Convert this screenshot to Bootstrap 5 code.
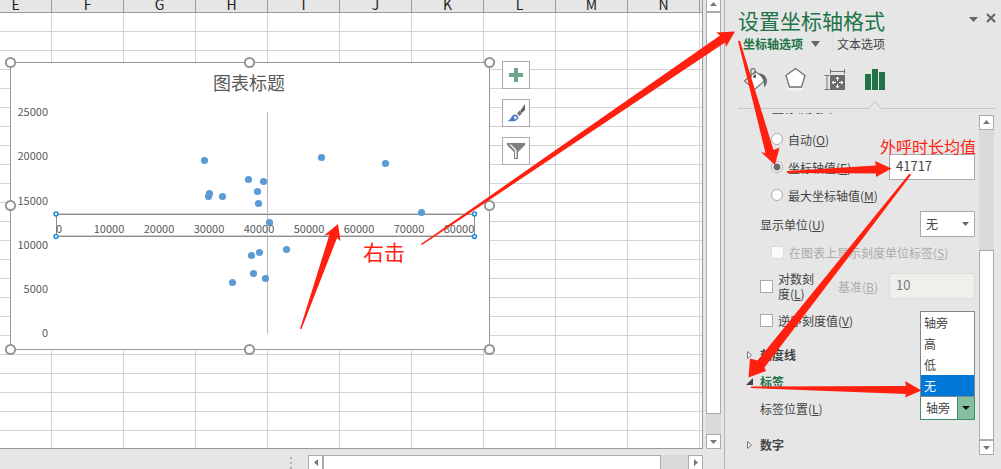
<!DOCTYPE html>
<html lang="zh-CN">
<head>
<meta charset="utf-8">
<meta name="viewport" content="width=device-width, initial-scale=1">
<title>设置坐标轴格式</title>
<link href="https://cdn.jsdelivr.net/npm/bootstrap@5.3.0/dist/css/bootstrap.min.css" rel="stylesheet">
<style>
  body { font-family: "Noto Sans CJK SC", sans-serif; font-size: 12px; line-height: 16px; color: #444; background: #e6e6e6; }
  .app { height: 100vh; }
  /* worksheet */
  .sheet { border-right: 1px solid #999; border-bottom: 1px solid #999; background: #fff; }
  .col-heads { height: 13px; background: #e6e6e6; border-bottom: 1px solid #999; padding-right: 2px; }
  .col-heads span { flex: 0 0 72px; border-right: 1px solid #999; color: #222; font-size: 14px; line-height: 16px; height: 16px; text-align: center; }
  .cells { background-image: linear-gradient(to left, #d4d4d4 1px, transparent 1px), linear-gradient(to top, #d4d4d4 1px, transparent 1px); background-size: 72px 19px; background-position: right 2px top 0; }
  .chart-box { left: 0; top: 43px; }
  .chart-tools { left: 502px; top: 48px; row-gap: 10px; }
  .chart-tools button { width: 28px; height: 28px; border: 1px solid #ababab; background: #fff; }
  .axis-text { font-size: 11px; fill: #595959; }
  /* scroll bars */
  .v-bar { width: 15px; background: #dadada; }
  .h-bar { height: 15px; width: 395px; background: #dadada; }
  .bar-btn { width: 15px; height: 15px; border: 1px solid #ababab; background: #fff; flex: none; }
  .bar-thumb { border: 1px solid #ababab; background: #fff; }
  .bar-rest { height: 20px; }
  .h-bar .bar-rest { width: 27px; }
  .side { width: 18px; padding-left: 3px; }
  .side .bar-btn:first-child { margin-top: -3px; }
  .foot { height: 20px; padding: 6px 18px 0 0; }
  .grip { width: 2px; height: 12px; margin: 2px 16px 0 0; background: repeating-linear-gradient(#b0b0b0 0 2px, transparent 2px 5px); }
  /* task pane */
  .pane { width: 277px; border-left: 1px solid #b4b4b4; padding-left: 13px; margin-left: 3px; }
  .pane h1 { font-size: 21px; line-height: 30px; color: #217346; font-weight: 400; }
  .title-row { padding: 5px 5px 0 0; }
  .tabs-row { height: 18px; padding-left: 5px; }
  .tabs-row a { color: #444; text-decoration: none; }
  .tabs-row a.on { color: #217346; font-weight: 700; }
  .tabs-row .sep { width: 1px; height: 16px; background: #dcdcdc; margin: 0 4px 0 12px; }
  .flat { background: none; border: 0; padding: 0; line-height: 0; }
  .icons-row { padding: 13px 0 0 5px; height: 47px; }
  .notch { height: 10px; }
  .pane-body { padding-right: 7px; }
  .opts { width: 237px; padding-left: 8px; }
  .opts label { line-height: 15px; }
  .cut { height: 12px; margin: 3px 0 0 14px; }
  .cut div { line-height: 16px; margin-top: -13px; }
  .r26 { height: 26px; }
  .r28 { height: 28px; }
  .r30 { height: 30px; }
  .r42 { height: 42px; }
  .ind1 { padding-left: 14px; }
  .ind2 { padding-left: 25px; }
  .opts input[type=radio], .opts input[type=checkbox] { appearance: none; width: 13px; height: 13px; margin: 0 5px 0 0; background: #fff; border: 1px solid #ababab; flex: none; }
  .opts input[type=radio] { border-radius: 50%; width: 12px; height: 12px; }
  .opts input[type=radio]:checked { background: radial-gradient(circle, #6a6a6a 0 3px, #fff 4px); }
  .opts input:disabled { border-color: #dcdcdc; background: #fafafa; opacity: 1; }
  .num-in { width: 86px; height: 26px; border: 1px solid #ababab; background: #fff; padding: 0 6px 3px; color: #444; font-size: 13px; border-radius: 0; }
  .opts .num-in:disabled { background: #efefec; color: #777; }
  .pick { width: 55px; height: 26px; }
  .pick select { appearance: none; width: 100%; height: 100%; border: 1px solid #ababab; background: #fff; padding: 0 5px; color: #444; border-radius: 0; }
  .pick svg { right: 6px; top: 11px; pointer-events: none; }
  .pick.open { height: 24px; }
  .pick.open svg { right: 5px; top: 10px; }
  .pick.open select { border-color: #3f9166; background: linear-gradient(to left, #86bf9f 16px, #3f9166 16px 17px, #fff 17px); }
  .menu { right: 0; bottom: 23px; width: 55px; border: 1px solid #7f8790; background: #fff; z-index: 2; }
  .menu button { height: 21px; width: 100%; text-align: left; color: #444; background: #fff; border: 0; padding: 0 3px; display: block; }
  .menu button.sel { background: #0078d7; color: #fff; }
  .dim { color: #ababab; }
  .sect { height: 27px; font-weight: 700; color: #444; padding: 0; background: none; border: 0; }
  .sect svg { margin-right: 7px; }
  .sect.on { color: #217346; }
  .sect-last { margin-top: 10px; }
  .pane-scroll { margin-top: 5px; height: 340px; }
  .pane-scroll .bar-thumb { height: 56%; }
  .marks { left: 0; top: 0; pointer-events: none; z-index: 5; }
</style>
</head>
<body class="overflow-hidden">
<div class="app d-flex position-relative">
  <main class="d-flex flex-column flex-grow-1 overflow-hidden">
    <div class="d-flex flex-grow-1">
      <section class="sheet d-flex flex-column flex-grow-1 overflow-hidden">
        <div class="col-heads d-flex justify-content-end align-items-end overflow-hidden flex-shrink-0">
          <span>E</span><span>F</span><span>G</span><span>H</span><span>I</span><span>J</span><span>K</span><span>L</span><span>M</span><span>N</span>
        </div>
        <div class="cells flex-grow-1 position-relative">
          <svg class="chart-box position-absolute" width="500" height="300" viewBox="0 56 500 300" font-family="Noto Sans CJK SC, sans-serif">
            <rect x="10.5" y="62.5" width="479" height="287" fill="#fff" stroke="#999"/>
            <text x="249" y="90" font-size="18" fill="#595959" text-anchor="middle">图表标题</text>
            <path d="M267.500 112V334" stroke="#b8b8b8"/>
            <g class="axis-text" text-anchor="end">
              <text x="48" y="116">25000</text><text x="48" y="160">20000</text><text x="48" y="205">15000</text>
              <text x="48" y="249">10000</text><text x="48" y="293">5000</text><text x="48" y="337">0</text>
            </g>
            <g fill="none"><path d="M56 213.500H474M56 235.500H474" stroke="#d0d0cc"/><rect x="56.500" y="214.500" width="418" height="22" stroke="#8c8c8c"/></g>
            <g fill="#5b9bd5">
              <circle cx="204.500" cy="160.500" r="3.600"/><circle cx="209.500" cy="193.500" r="3.600"/><circle cx="208.500" cy="196.500" r="3.600"/><circle cx="222.500" cy="196.500" r="3.600"/><circle cx="248.500" cy="179.500" r="3.600"/><circle cx="263.500" cy="181.500" r="3.600"/><circle cx="257.500" cy="191.500" r="3.600"/><circle cx="258.500" cy="203.500" r="3.600"/><circle cx="321.500" cy="157.500" r="3.600"/><circle cx="385.500" cy="163.500" r="3.600"/><circle cx="421.500" cy="212.500" r="3.600"/><circle cx="269.500" cy="222.500" r="3.600"/><circle cx="286.500" cy="249.500" r="3.600"/><circle cx="259.500" cy="252.500" r="3.600"/><circle cx="251.500" cy="255.500" r="3.600"/><circle cx="253.500" cy="273.500" r="3.600"/><circle cx="265.500" cy="278.500" r="3.600"/><circle cx="232.500" cy="282.500" r="3.600"/>
            </g>
            <g class="axis-text" text-anchor="middle">
              <text x="59" y="233">0</text><text x="109" y="233">10000</text><text x="159" y="233">20000</text><text x="209" y="233">30000</text><text x="259" y="233">40000</text><text x="309" y="233">50000</text><text x="359" y="233">60000</text><text x="409" y="233">70000</text><text x="459" y="233">80000</text>
            </g>
            <g fill="#fff" stroke="#1e88d8" stroke-width="1.500"><circle cx="56" cy="214" r="1.900"/><circle cx="474.500" cy="214" r="1.900"/><circle cx="56" cy="236.500" r="1.900"/><circle cx="474.500" cy="236.500" r="1.900"/></g>
            <g fill="#fff" stroke="#969696" stroke-width="2"><circle cx="10.500" cy="62.500" r="4.600"/><circle cx="249.500" cy="62.500" r="4.600"/><circle cx="489.500" cy="62.500" r="4.600"/><circle cx="10.500" cy="205.500" r="4.600"/><circle cx="489.500" cy="205.500" r="4.600"/><circle cx="10.500" cy="349.500" r="4.600"/><circle cx="249.500" cy="349.500" r="4.600"/><circle cx="489.500" cy="349.500" r="4.600"/></g>
          </svg>
          <div class="chart-tools position-absolute d-grid">
            <button class="p-0 d-block" aria-label="图表元素"><svg class="d-block" width="26" height="26"><path d="M11 6h4v5h5v4h-5v5h-4v-5H6v-4h5z" fill="#6aa78c"/></svg></button>
            <button class="p-0 d-block" aria-label="图表样式"><svg class="d-block" width="26" height="26"><path d="M22 4v6l-3 3-2-2z" fill="#666"/><path d="M16.500 10.500l2.500 3-2.500 2.500-2.500-2.500z" fill="#777"/><path d="M9 16c2-2 4-2 5.500-.5 1.500 2 .5 4-1.500 5-2 1-5 1-9 .7 2-.9 4-2.400 5-5.200z" fill="#4a7ebb"/><path d="M10.500 17c1-1 2.500-1 3 0 .5 1.500-.5 2.500-2 2.500.5-1 0-2-1-2.500z" fill="#fff"/></svg></button>
            <button class="p-0 d-block" aria-label="图表筛选器"><svg class="d-block" width="26" height="26"><path d="M4 5h18v2l-7 7v7h-4v-7L4 7z" fill="#7f7f7f"/><path d="M6.500 6.500l5.500 6v7.500h1.500v-8L8 6.500z" fill="#fff"/></svg></button>
          </div>
        </div>
      </section>
      <div class="side d-flex flex-shrink-0">
        <div class="v-bar d-flex flex-column">
          <div class="bar-btn"><svg class="d-block" width="13" height="13"><path d="M3 8l3.500-4L10 8z" fill="#777"/></svg></div>
          <div class="bar-thumb flex-grow-1"></div>
          <div class="bar-rest"></div>
          <div class="bar-btn"><svg class="d-block" width="13" height="13"><path d="M3 5l3.500 4L10 5z" fill="#777"/></svg></div>
        </div>
      </div>
    </div>
    <div class="foot d-flex justify-content-end flex-shrink-0">
      <div class="grip"></div>
      <div class="h-bar d-flex">
        <div class="bar-btn"><svg class="d-block" width="13" height="13"><path d="M9 3L5 6.500 9 10z" fill="#777"/></svg></div>
        <div class="bar-thumb flex-grow-1"></div>
        <div class="bar-rest"></div>
        <div class="bar-btn"><svg class="d-block" width="13" height="13"><path d="M5 3l4 3.500L5 10z" fill="#777"/></svg></div>
      </div>
    </div>
  </main>

  <aside class="pane flex-shrink-0">
    <div class="title-row d-flex align-items-start">
      <h1 class="mb-0 flex-grow-1">设置坐标轴格式</h1>
      <button class="flat me-2 mt-2 pt-1" aria-label="选项"><svg class="d-block" width="9" height="5"><path d="M0 0h9L4.500 5z" fill="#666"/></svg></button>
      <button class="flat mt-2" aria-label="关闭"><svg class="d-block" width="10" height="10"><path d="M1 1l8 8M9 1L1 9" stroke="#666" stroke-width="2.200"/></svg></button>
    </div>
    <nav class="tabs-row d-flex align-items-center">
      <a class="on" href="#">坐标轴选项</a>
      <svg class="ms-2" width="9" height="6"><path d="M0 0h9L4.500 6z" fill="#666"/></svg>
      <span class="sep"></span>
      <a href="#">文本选项</a>
    </nav>
    <div class="icons-row">
      <svg width="145" height="26" viewBox="743 65 145 26" class="d-block">
        <path d="M744.500 80l11-9.500 10.500 8-11.500 10z" fill="#fff" stroke="#737373" stroke-width="1.200"/>
        <path d="M751 77v-7.500c0-2.500 4-2.500 4 0v6" fill="none" stroke="#737373" stroke-width="1.200"/><circle cx="754.500" cy="75.500" r="1.500" fill="#555"/>
        <path d="M759 72.500c5 0 8 3 8 8-.5 3-1.500 5-3 6 .5-5-1-9-5-14z" fill="#6b6b6b"/>
        <path d="M795.500 67.500l9.500 7-3.500 11.500h-12L786 74.500z" fill="#fff" stroke="#737373" stroke-width="1.300"/>
        <path d="M788 87h15v2.500h-15z" fill="#fff" opacity=".6"/>
        <path d="M830.500 70.500h14M830.500 68v5M844.500 68v5M827 74.500v14M824.500 74.500h5M824.500 88.500h5" stroke="#737373" fill="none"/>
        <path d="M830 74h15v15h-15z" fill="#6b6b6b"/>
        <path d="M837 76h1v11h-1zM832 81h11v1h-11z" fill="#fff"/><path d="M837.500 75.500l2 2.500h-4zM837.500 87.500l2-2.500h-4zM831.500 81.500l2.500-2v4zM843.500 81.500l-2.500-2v4z" fill="#fff"/><path d="M836 80h3v3h-3z" fill="#6b6b6b"/>
        <path d="M865 73h6v16h-6zM872 68h6v21h-6zM879 71h6v18h-6z" fill="#217346"/>
      </svg>
    </div>
    <svg class="notch d-block" width="257" height="10"><path d="M0 8.500H131L137 1.500 143 8.500H257" fill="none" stroke="#c6c6c6"/></svg>
    <div class="pane-body d-flex justify-content-between">
      <form class="opts">
        <div class="cut overflow-hidden"><div>纵坐标轴交叉</div></div>
        <div class="r28 d-flex align-items-center ind2"><input type="radio" name="cross" id="c1"><label for="c1">自动(<u>O</u>)</label></div>
        <div class="r28 d-flex align-items-center ind2"><input type="radio" name="cross" id="c2" checked><label class="flex-grow-1" for="c2">坐标轴值(<u>E</u>)</label><input class="num-in" type="text" value="41717" aria-label="坐标轴值"></div>
        <div class="r28 d-flex align-items-center ind2"><input type="radio" name="cross" id="c3"><label for="c3">最大坐标轴值(<u>M</u>)</label></div>
        <div class="r30 d-flex align-items-center ind1"><label class="flex-grow-1" for="unit">显示单位(<u>U</u>)</label>
          <div class="pick position-relative"><select id="unit"><option>无</option></select><svg class="position-absolute" width="7" height="4"><path d="M0 0h7L3.500 4z" fill="#666"/></svg></div></div>
        <div class="r26 d-flex align-items-center ind2"><input type="checkbox" id="k1" disabled><label class="dim" for="k1">在图表上显示刻度单位标签(<u>S</u>)</label></div>
        <div class="r42 d-flex align-items-center ind1"><input type="checkbox" id="k2"><label for="k2">对数刻<br>度(<u>L</u>)</label><label class="dim flex-grow-1 ms-4" for="base">基准(<u>B</u>)</label><input class="num-in" id="base" type="text" value="10" disabled></div>
        <div class="r26 d-flex align-items-center ind1"><input type="checkbox" id="k3"><label for="k3">逆序刻度值(<u>V</u>)</label></div>
        <button type="button" class="sect d-flex align-items-center mt-2"><svg width="7" height="10"><path d="M1.500 1.500v7L5.500 5z" fill="#fff" stroke="#777"/></svg>刻度线</button>
        <button type="button" class="sect on d-flex align-items-center"><svg width="7" height="7"><path d="M7 0v7H0z" fill="#444"/></svg>标签</button>
        <div class="r26 d-flex align-items-center ind1"><label class="flex-grow-1" for="pos">标签位置(<u>L</u>)</label>
          <div class="pick open position-relative"><select id="pos"><option>轴旁</option></select><svg class="position-absolute" width="8" height="4"><path d="M0 0h8L4 4z" fill="#111"/></svg>
            <div class="menu position-absolute"><button type="button">轴旁</button><button type="button">高</button><button type="button">低</button><button type="button" class="sel">无</button></div></div></div>
        <button type="button" class="sect sect-last d-flex align-items-center"><svg width="7" height="10"><path d="M1.500 1.500v7L5.500 5z" fill="#fff" stroke="#777"/></svg>数字</button>
      </form>
      <div class="pane-scroll v-bar d-flex flex-column">
        <div class="bar-btn"><svg class="d-block" width="13" height="13"><path d="M3 8l3.500-4L10 8z" fill="#777"/></svg></div>
        <div class="flex-grow-1"></div>
        <div class="bar-thumb"></div>
        <div class="bar-btn"><svg class="d-block" width="13" height="13"><path d="M3 5l3.500 4L10 5z" fill="#777"/></svg></div>
      </div>
    </div>
  </aside>

  <!-- red call-outs drawn over the window -->
  <svg class="marks position-absolute" width="1001" height="469" fill="#ff2010" font-family="Noto Sans CJK SC, sans-serif">
    <path d="M421 244L720 35.500 716 32.500 735 31.500 726 47 725 42.500 422 245z"/>
    <path d="M738 41L765.500 153 761 152 775 165 779.500 147.500 773.500 150 740 41z"/>
    <path d="M787 171L876 165.500 875 161 891.500 168.500 876 177 876 173.500 787 173z"/>
    <path d="M909.500 173.500L757.500 360.500 750 358.500 748.500 377.500 766 371 764.500 367.500 911 175z"/>
    <path d="M751 386.500L906 386 905 381 921.500 390.500 905 397.500 906 394 751 388z"/>
    <path d="M300 329L329.500 234.500 324 235.500 338 224 340.500 241 337 238 301.500 329z"/>
    <text x="363" y="260" font-size="21">右击</text>
    <text x="880" y="153" font-size="16">外呼时长均值</text>
  </svg>
</div>
<script src="https://cdn.jsdelivr.net/npm/bootstrap@5.3.0/dist/js/bootstrap.bundle.min.js"></script>
</body>
</html>
